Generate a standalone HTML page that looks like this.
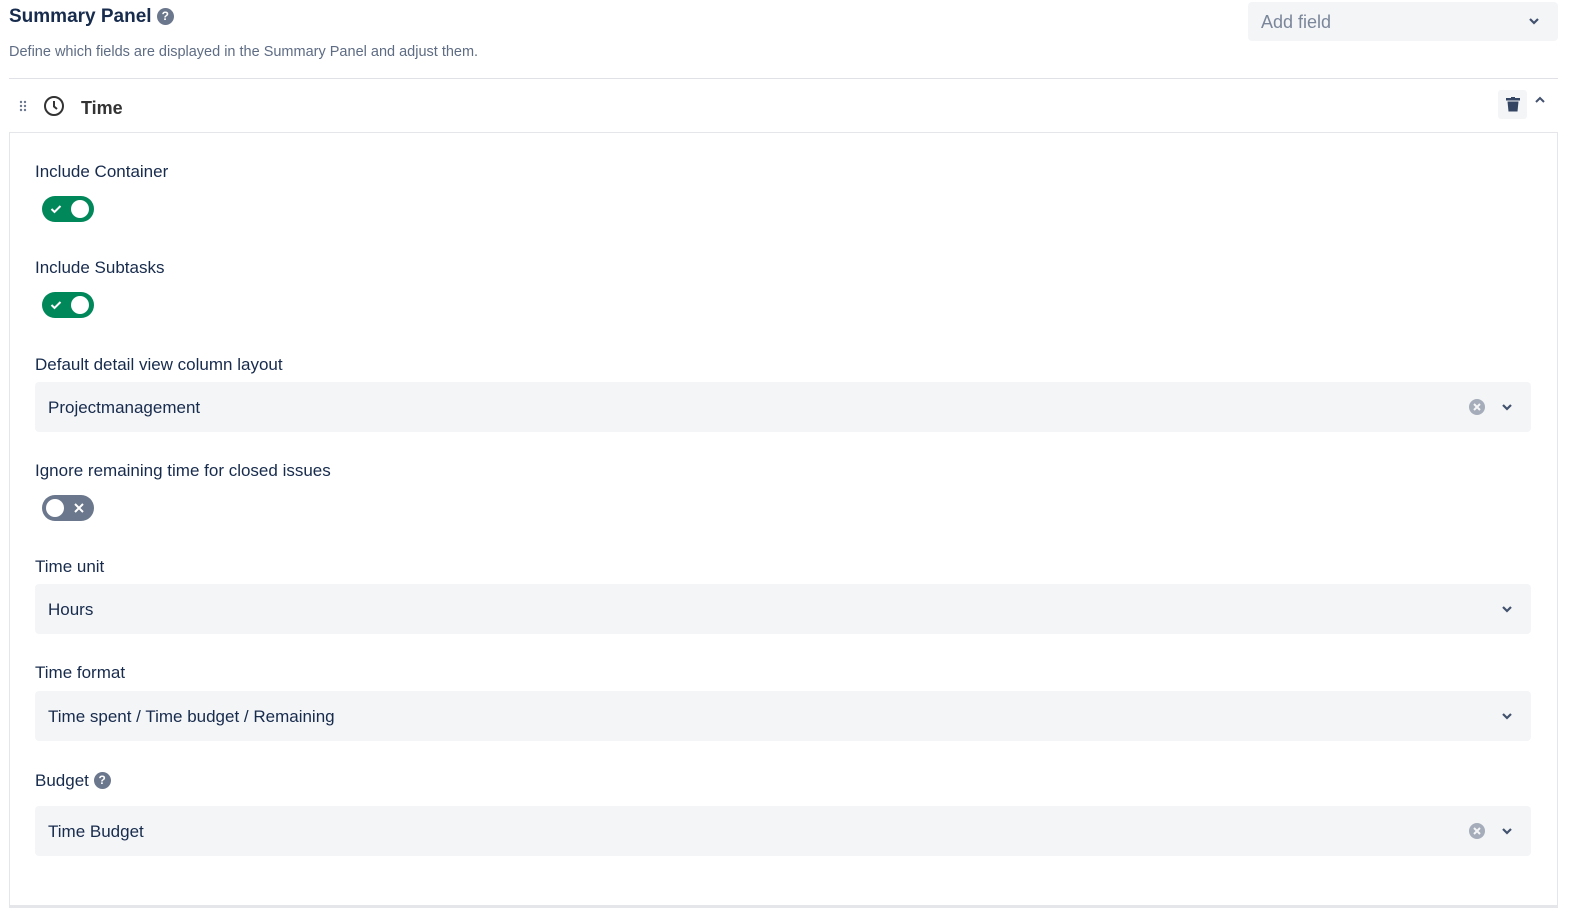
<!DOCTYPE html>
<html><head><style>
*{margin:0;padding:0;box-sizing:border-box}
body{width:1569px;height:918px;background:#fff;font-family:"Liberation Sans",sans-serif;color:#172b4d;position:relative;overflow:hidden}
.a{position:absolute}
.lbl{position:absolute;left:35px;font-size:17px;color:#172b4d;line-height:20px}
.sel{position:absolute;left:35px;width:1496px;height:50px;background:#f4f5f7;border-radius:4px;font-size:17px;line-height:52px;padding-left:13px;color:#172b4d}
.tg{position:absolute;left:42px;width:52px;height:26px;border-radius:13px}
.tg .k{position:absolute;top:4px;width:18px;height:18px;border-radius:50%;background:#fff}
.chev{position:absolute;right:18px;top:21px}
.clr{position:absolute;right:46px;top:17px;width:16px;height:16px;border-radius:50%;background:#a5adba}
.clr svg{display:block}
.help{display:inline-block;width:17px;height:17px;border-radius:50%;background:#6b778c;color:#fff;font-size:12px;font-weight:bold;text-align:center;line-height:17px;vertical-align:2px}
</style></head><body>
<div class="a" style="left:9px;top:5px;font-size:19px;font-weight:bold;line-height:24px">Summary Panel <span class="help">?</span></div>
<div class="a" style="left:9px;top:43px;font-size:14.5px;color:#5e6c84;line-height:18px">Define which fields are displayed in the Summary Panel and adjust them.</div>
<div class="a" style="left:1248px;top:2px;width:310px;height:39px;background:#f4f5f7;border-radius:4px;font-size:18px;color:#7a869a;line-height:41px;padding-left:13px">Add field
<svg class="a" style="right:18px;top:15px" width="12" height="9" viewBox="0 0 12 9"><path d="M2 2l4 4 4-4" stroke="#42526e" stroke-width="2.2" fill="none"/></svg></div>
<div class="a" style="left:9px;top:78px;width:1549px;height:1px;background:#dfe1e6"></div>
<svg class="a" style="left:19px;top:100px" width="8" height="12"><g fill="#6b778c"><circle cx="2" cy="2" r="1.2"/><circle cx="6" cy="2" r="1.2"/><circle cx="2" cy="6" r="1.2"/><circle cx="6" cy="6" r="1.2"/><circle cx="2" cy="10" r="1.2"/><circle cx="6" cy="10" r="1.2"/></g></svg>
<svg class="a" style="left:43px;top:95px" width="22" height="22" viewBox="0 0 22 22"><circle cx="11" cy="11" r="9" stroke="#333" stroke-width="2" fill="none"/><path d="M11 6v5.5l3 2.5" stroke="#333" stroke-width="2" fill="none"/></svg>
<div class="a" style="left:81px;top:97px;font-size:18px;font-weight:bold;color:#333;line-height:22px">Time</div>
<div class="a" style="left:1498px;top:90px;width:29px;height:29px;background:#f4f5f7;border-radius:3px"><svg class="a" style="left:8px;top:7px" width="14" height="15" viewBox="0 0 14 15"><rect x="0" y="1" width="14" height="2.5" fill="#344563"/><rect x="5" y="0" width="4" height="2" fill="#344563"/><path d="M1.5 4.5h11l-1 10h-9z" fill="#344563"/></svg></div>
<svg class="a" style="left:1534px;top:95px" width="12" height="9"><path d="M2 7l4-4 4 4" stroke="#42526e" stroke-width="2" fill="none"/></svg>
<div class="a" style="left:9px;top:132px;width:1549px;height:776px;border:1px solid #e4e6ea;border-bottom:3px solid #e4e6ea"></div>

<div class="lbl" style="top:162px">Include Container</div>
<div class="tg" style="top:196px;background:#00875a"><svg class="a" style="left:8px;top:8px" width="12" height="10"><path d="M1.5 5l3 3 6-6" stroke="#fff" stroke-width="2" fill="none"/></svg><div class="k" style="left:29px"></div></div>
<div class="lbl" style="top:258px">Include Subtasks</div>
<div class="tg" style="top:292px;background:#00875a"><svg class="a" style="left:8px;top:8px" width="12" height="10"><path d="M1.5 5l3 3 6-6" stroke="#fff" stroke-width="2" fill="none"/></svg><div class="k" style="left:29px"></div></div>
<div class="lbl" style="top:355px">Default detail view column layout</div>
<div class="sel" style="top:382px">Projectmanagement<div class="clr"><svg width="16" height="16"><path d="M5 5l6 6M11 5l-6 6" stroke="#f4f5f7" stroke-width="2"/></svg></div><svg class="chev" width="12" height="9"><path d="M2 2l4 4 4-4" stroke="#42526e" stroke-width="2.2" fill="none"/></svg></div>
<div class="lbl" style="top:461px">Ignore remaining time for closed issues</div>
<div class="tg" style="top:495px;background:#6b778c"><div class="k" style="left:4px"></div><svg class="a" style="left:32px;top:8px" width="10" height="10"><path d="M1 1l8 8M9 1l-8 8" stroke="#fff" stroke-width="2"/></svg></div>
<div class="lbl" style="top:557px">Time unit</div>
<div class="sel" style="top:584px">Hours<svg class="chev" width="12" height="9"><path d="M2 2l4 4 4-4" stroke="#42526e" stroke-width="2.2" fill="none"/></svg></div>
<div class="lbl" style="top:663px">Time format</div>
<div class="sel" style="top:691px">Time spent / Time budget / Remaining<svg class="chev" width="12" height="9"><path d="M2 2l4 4 4-4" stroke="#42526e" stroke-width="2.2" fill="none"/></svg></div>
<div class="lbl" style="top:771px">Budget <span class="help">?</span></div>
<div class="sel" style="top:806px">Time Budget<div class="clr"><svg width="16" height="16"><path d="M5 5l6 6M11 5l-6 6" stroke="#f4f5f7" stroke-width="2"/></svg></div><svg class="chev" width="12" height="9"><path d="M2 2l4 4 4-4" stroke="#42526e" stroke-width="2.2" fill="none"/></svg></div>
</body></html>
